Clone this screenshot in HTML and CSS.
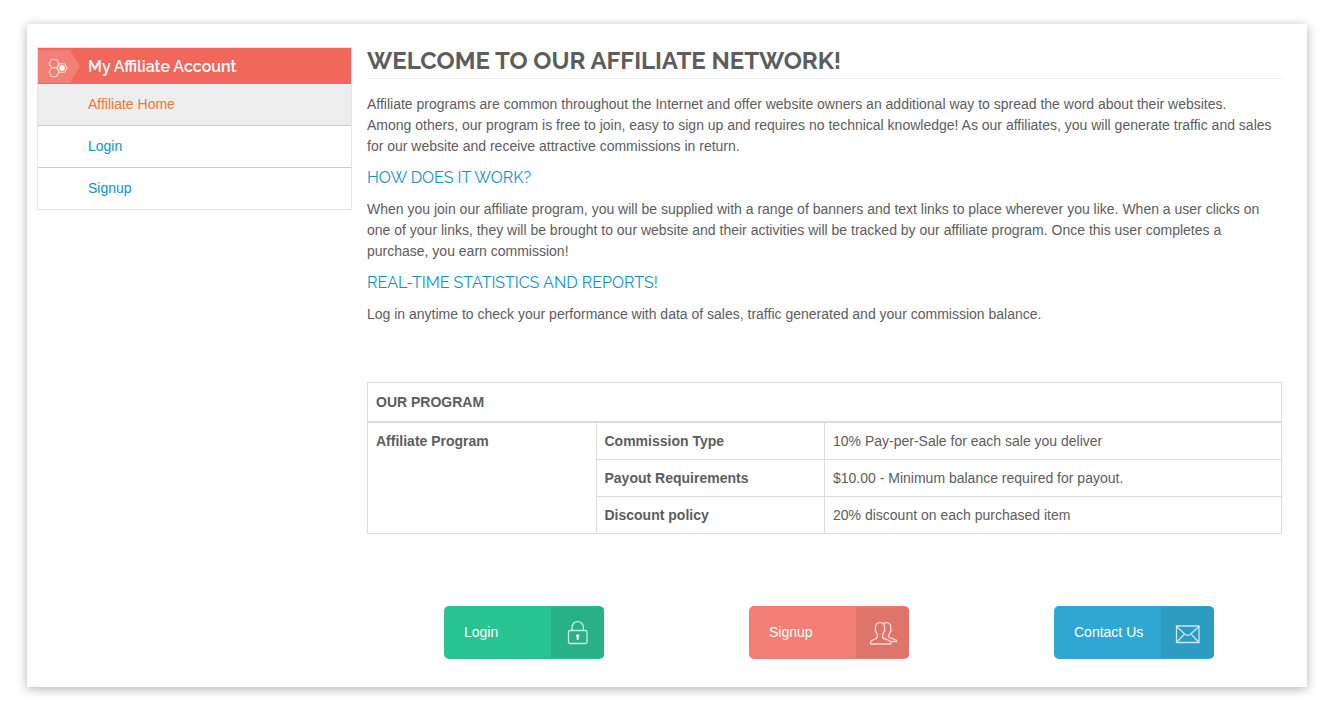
FILE: index.html
```html
<!DOCTYPE html>
<html lang="en">
<head>
<meta charset="utf-8">
<title>Affiliate Network</title>
<link rel="stylesheet" href="styles.css">
</head>
<body>
<div class="page">
  <nav class="sidebar" aria-labelledby="account-title">
    <div class="sidebar-head">
      <svg class="sidebar-icon" viewBox="0 0 42 36" aria-hidden="true">
        <path d="M0 2H32L42 18.500 32 35H0Z" fill="#f47f74"/>
        <g fill="none" stroke="#fcd9d5" stroke-width="1.100">
          <path d="M13.500 11.500h5l2.500 4-2.500 4h-5l-2.500-4z"/>
          <path d="M13.500 20h5l2.500 4-2.500 4.500h-5l-2.500-4.500z"/>
          <path d="M21.500 15.700h5l2.500 4.300-2.500 4.300h-5l-2.500-4.300z"/>
        </g>
        <circle cx="24" cy="20" r="2.800" fill="#fff"/>
      </svg>
      <h2 class="sidebar-title" id="account-title">My Affiliate Account</h2>
    </div>
    <ul class="menu">
      <li><a class="menu-link active" href="#home">Affiliate Home</a></li>
      <li><a class="menu-link" href="#login">Login</a></li>
      <li><a class="menu-link" href="#signup">Signup</a></li>
    </ul>
  </nav>
  <main class="content">
    <h1 class="title">WELCOME TO OUR AFFILIATE NETWORK!</h1>
    <p>Affiliate programs are common throughout the Internet and offer website owners an additional way to spread the word about their websites.<br>Among others, our program is free to join, easy to sign up and requires no technical knowledge! As our affiliates, you will generate traffic and sales for our website and receive attractive commissions in return.</p>
    <h3 class="subtitle">HOW DOES IT WORK?</h3>
    <p>When you join our affiliate program, you will be supplied with a range of banners and text links to place wherever you like. When a user clicks on one of your links, they will be brought to our website and their activities will be tracked by our affiliate program. Once this user completes a purchase, you earn commission!</p>
    <h3 class="subtitle">REAL-TIME STATISTICS AND REPORTS!</h3>
    <p>Log in anytime to check your performance with data of sales, traffic generated and your commission balance.</p>
    <table class="program">
      <colgroup><col class="quarter"><col class="quarter"><col></colgroup>
      <thead>
        <tr><th colspan="3">OUR PROGRAM</th></tr>
      </thead>
      <tbody>
        <tr><th rowspan="3">Affiliate Program</th><th>Commission Type</th><td>10% Pay-per-Sale for each sale you deliver</td></tr>
        <tr><th>Payout Requirements</th><td>$10.00 - Minimum balance required for payout.</td></tr>
        <tr><th>Discount policy</th><td>20% discount on each purchased item</td></tr>
      </tbody>
    </table>
    <div class="actions">
      <a class="action green" href="#login"><span class="action-label">Login</span>
        <span class="action-icon"><svg viewBox="0 0 28 28" aria-hidden="true"><rect x="4.500" y="11.500" width="18.500" height="13" rx="1.500"/><path d="M8 11.500V8.300a5.700 5.700 0 0 1 11.400 0v3.200"/><path class="solid" d="M13.700 15.300a1.700 1.700 0 0 1 1 3v2.500h-2v-2.500a1.700 1.700 0 0 1 1-3z"/></svg></span></a>
      <a class="action red" href="#signup"><span class="action-label">Signup</span>
        <span class="action-icon"><svg viewBox="0 0 28 28" aria-hidden="true"><path d="M1.500 25v-2.200C2.500 20.700 8 20.500 8.500 17.800c.2-1.500-.8-2.300-1.200-4.600-.9-.8-1.300-2.500-.7-3.600C6 6 7.500 3.700 11 3.700S16 6 15.400 9.600c.6 1.100.2 2.800-.7 3.600-.4 2.300-1.400 3.100-1.200 4.600.5 2.700 7 2.900 8.300 5V25z"/><path d="M14.500 4.500c.8-.5 1.600-.8 2.800-.8 3.500 0 5 2.300 4.400 5.900.6 1.100.2 2.800-.7 3.600-.4 2.300-1.700 2.800-1.500 4.200.4 2.100 6.700 2 7.800 3.800v1.300h-4.700"/></svg></span></a>
      <a class="action blue" href="#contact"><span class="action-label">Contact Us</span>
        <span class="action-icon"><svg viewBox="0 0 28 28" aria-hidden="true"><path d="M2.500 7H25v16.500H2.500z"/><path d="M2.500 7.500l8.500 7.800q2.700 2.300 5.400 0L25 7.500M3 23l7-7.500M24.500 23l-7-7.500"/></svg></span></a>
    </div>
  </main>
</div>
</body>
</html>
```
FILE: styles.css
```css
* {
  box-sizing: border-box;
}

body {
  margin: 0;
  background: #fff;
  color: #5d5d5d;
  font: 14px/21px "Liberation Sans", Arial, sans-serif;
}

h1, h2, h3, p, ul {
  margin: 0;
}

a {
  text-decoration: none;
}

.page {
  display: grid;
  grid-template-columns: 315fr 915fr;
  column-gap: 15px;
  align-items: start;
  margin: 24px 25px 31px 27px;
  padding: 23px 25px 28px 10px;
  background: #fff;
  box-shadow: 0 2px 10px rgba(0, 0, 0, 0.3);
}

.sidebar {
  border: 1px solid #e5e5e5;
}

.sidebar-head {
  display: flex;
  align-items: center;
  gap: 8px;
  height: 36px;
  background: #f2675b;
}

.sidebar-icon {
  flex: none;
  width: 42px;
  height: 36px;
}

.sidebar-title {
  padding-top: 2px;
  color: #fff;
  font: 600 16px/34px Raleway, Lato, sans-serif;
}

.menu {
  padding: 0;
  list-style: none;
}

.menu li + li {
  border-top: 1px solid #ccc;
}

.menu-link {
  display: block;
  padding: 10px 50px;
  color: #0e93c9;
}

.menu-link.active {
  background: #eee;
  color: #f1762b;
}

.title {
  margin-bottom: 15px;
  padding-bottom: 4px;
  border-bottom: 1px solid #eee;
  font: 700 24px/27px Raleway, Lato, sans-serif;
}

.subtitle {
  margin: 10px 0;
  color: #0e93c9;
  font: 400 16px/22px Raleway, Lato, sans-serif;
}

.program {
  width: 100%;
  margin-top: 57px;
  border-collapse: collapse;
  table-layout: fixed;
  line-height: 20px;
}

.program th,
.program td {
  padding: 8px;
  border: 1px solid #ddd;
  text-align: left;
  vertical-align: top;
}

.program thead th {
  padding: 9px 8px;
  border-bottom-width: 2px;
}

.quarter {
  width: 25%;
}

.actions {
  display: grid;
  grid-template-columns: repeat(3, 1fr);
  justify-items: center;
  margin-top: 72px;
}

.action {
  display: flex;
  width: 160px;
  height: 53px;
  padding: 1px 0;
  margin-left: 9px;
  overflow: hidden;
  border-radius: 5px;
  color: #fff;
}

.action-label {
  flex: 1;
  padding-left: 20px;
  line-height: 51px;
}

.action-icon {
  display: flex;
  align-items: center;
  justify-content: center;
  width: 53px;
}

.action svg {
  width: 28px;
  height: 28px;
  fill: none;
  stroke: rgba(255, 255, 255, 0.75);
  stroke-width: 1.3px;
}

.action .solid {
  fill: #fff;
  stroke: none;
}

.green {
  background: #27c491;
}

.green .action-icon {
  background: #27b185;
}

.red {
  background: #f37e74;
}

.red .action-icon {
  background: #df746b;
}

.blue {
  background: #2fa7d3;
}

.blue .action-icon {
  background: #2e9bc3;
}
```
